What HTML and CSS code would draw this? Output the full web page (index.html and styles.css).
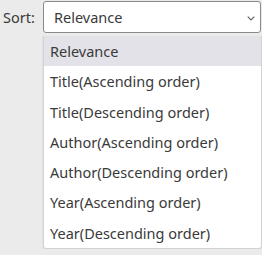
FILE: index.html
```html
<!DOCTYPE html>
<html>
<head>
<meta charset="utf-8">
<link rel="stylesheet" href="styles.css">
</head>
<body>
<div class="sort">
  <span class="label">Sort:</span>
  <div class="control">
    <div class="select">
      <span class="value">Relevance</span>
      <svg class="chev" width="8" height="5" viewBox="0 0 8 5"><path d="M0.7 0.7 L4 4 L7.3 0.7" fill="none" stroke="#666" stroke-width="1.2"/></svg>
    </div>
    <ul class="list">
      <li class="opt active">Relevance</li>
      <li class="opt">Title(Ascending order)</li>
      <li class="opt">Title(Descending order)</li>
      <li class="opt">Author(Ascending order)</li>
      <li class="opt">Author(Descending order)</li>
      <li class="opt">Year(Ascending order)</li>
      <li class="opt">Year(Descending order)</li>
    </ul>
  </div>
</div>
</body>
</html>
```

FILE: styles.css
```css
html, body {
  margin: 0;
  padding: 0;
  background: #ebebeb;
  font-family: "Noto Sans", "Liberation Sans", sans-serif;
  color: #3a3a3a;
}
.sort {
  display: flex;
  align-items: flex-start;
  padding-top: 1px;
}
.label {
  width: 43px;
  padding-left: 3px;
  box-sizing: border-box;
  font-size: 14.5px;
  line-height: 32px;
}
.control {
  display: flex;
  flex-direction: column;
  gap: 3px;
  width: 218px;
}
.select {
  height: 32px;
  box-sizing: border-box;
  background: #fff;
  border: 1px solid #8a8a8a;
  border-radius: 3px;
  display: flex;
  align-items: center;
  justify-content: space-between;
  padding: 0 5px 0 10px;
  font-size: 14.5px;
}
.chev {
  display: block;
  margin-top: 2px;
}
.list {
  list-style: none;
  margin: 0;
  padding: 0;
  width: 217px;
  background: #fff;
  border: 1px solid #d2d2d2;
  border-top: none;
  border-radius: 0 0 3px 3px;
  box-shadow: 0 1px 2px rgba(0,0,0,0.12);
}
.opt {
  height: 30.3px;
  line-height: 31px;
  padding-left: 6px;
  font-size: 14.5px;
  white-space: nowrap;
}
.opt.active {
  background: #e2e2e8;
}
```
